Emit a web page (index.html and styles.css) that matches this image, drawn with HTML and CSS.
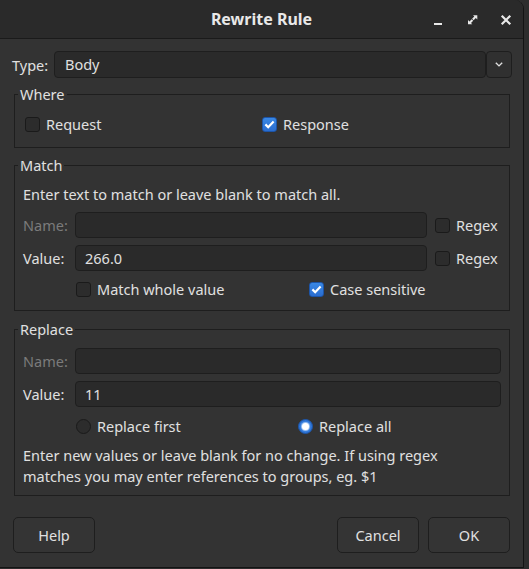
FILE: index.html
```html
<!DOCTYPE html>
<html lang="en">
<head>
<meta charset="utf-8">
<title>Rewrite Rule</title>
<link rel="stylesheet" href="styles.css">
</head>
<body>
<div class="window">
  <header class="titlebar">
    <div class="title">Rewrite Rule</div>
    <div class="wm">
      <svg viewBox="0 0 24 24"><rect x="8" y="16" width="8" height="2" fill="#e8e8e8"/></svg>
      <svg viewBox="0 0 24 24"><path d="M13 8.3H17.3V12.6L15.8 11.1L13.6 13.3L12.1 11.8L14.3 9.6Z" fill="#e8e8e8"/><path d="M12.3 17.3H8V13L9.5 14.5L11.7 12.3L13.2 13.8L11 16Z" fill="#e8e8e8"/></svg>
      <svg viewBox="0 0 24 24"><path d="M8.5 9.5L15.5 16.5M15.5 9.5L8.5 16.5" stroke="#e8e8e8" stroke-width="2.2" stroke-linecap="square"/></svg>
    </div>
  </header>
  <main class="content">
    <div class="type-row">
      <span class="type-label">Type:</span>
      <div class="combo">Body</div>
      <div class="combo-btn"><svg viewBox="0 0 8 5" width="8" height="5"><path d="M0.8 0.8L4 3.9L7.2 0.8" fill="none" stroke="#e0e0e0" stroke-width="1.4"/></svg></div>
    </div>

    <fieldset class="group g-where">
      <legend>Where</legend>
      <div class="inner inner-where">
        <div class="opts opts-where">
          <label class="check"><span class="box"></span>Request</label>
          <label class="check"><span class="box on"><svg viewBox="0 0 15 15"><path d="M3.4 7.4L6.2 10.2L11.6 4.6" fill="none" stroke="#fff" stroke-width="2.2"/></svg></span>Response</label>
        </div>
      </div>
    </fieldset>

    <fieldset class="group g-match">
      <legend>Match</legend>
      <div class="inner inner-match">
        <p class="hint">Enter text to match or leave blank to match all.</p>
        <div class="field-row fr-match first">
          <span class="flabel disabled">Name:</span>
          <div class="input"></div>
          <label class="check regex"><span class="box"></span>Regex</label>
        </div>
        <div class="field-row fr-match">
          <span class="flabel">Value:</span>
          <div class="input">266.0</div>
          <label class="check regex"><span class="box"></span>Regex</label>
        </div>
        <div class="opts opts-match">
          <label class="check"><span class="box"></span>Match whole value</label>
          <label class="check"><span class="box on"><svg viewBox="0 0 15 15"><path d="M3.4 7.4L6.2 10.2L11.6 4.6" fill="none" stroke="#fff" stroke-width="2.2"/></svg></span>Case sensitive</label>
        </div>
      </div>
    </fieldset>

    <fieldset class="group g-replace">
      <legend>Replace</legend>
      <div class="inner inner-replace">
        <div class="field-row fr-replace first">
          <span class="flabel disabled">Name:</span>
          <div class="input"></div>
        </div>
        <div class="field-row fr-replace">
          <span class="flabel">Value:</span>
          <div class="input">11</div>
        </div>
        <div class="opts opts-replace">
          <label class="check"><span class="radio"></span>Replace first</label>
          <label class="check"><span class="radio on"></span>Replace all</label>
        </div>
        <p class="hint hint2">Enter new values or leave blank for no change. If using regex matches you may enter references to groups, eg. $1</p>
      </div>
    </fieldset>

    <div class="buttons">
      <button class="btn help">Help</button>
      <button class="btn cancel">Cancel</button>
      <button class="btn">OK</button>
    </div>
  </main>
</div>
</body>
</html>
```

FILE: styles.css
```css
* { box-sizing: border-box; }
html, body { margin: 0; padding: 0; }
body {
  width: 529px;
  height: 569px;
  overflow: hidden;
  background: #2d2d2d;
  font-family: "Noto Sans", "DejaVu Sans", sans-serif;
  font-size: 14.5px;
  color: #e0e0e0;
}
.window {
  width: 524px;
  height: 568px;
  background: #333333;
  border-right: 1px solid #141414;
  border-bottom: 1px solid #141414;
  border-top-right-radius: 9px;
  overflow: hidden;
  display: flex;
  flex-direction: column;
}
.titlebar {
  flex: none;
  height: 39px;
  background: #2a2a2a;
  border-bottom: 1px solid #1a1a1a;
  display: grid;
  grid-template-columns: 1fr auto 1fr;
  align-items: center;
}
.title {
  grid-column: 2;
  font-weight: 700;
  font-size: 16px;
  color: #e8e8e8;
}
.wm {
  grid-column: 3;
  justify-self: end;
  display: flex;
  gap: 10px;
  padding-right: 5px;
}
.wm svg { width: 24px; height: 24px; display: block; }

.content {
  flex: 1;
  display: flex;
  flex-direction: column;
  padding: 12px 13px 0 14px;
}
.type-row {
  display: flex;
  align-items: center;
  height: 27px;
  margin: 0 -2px;
}
.type-label { width: 42px; }
.combo {
  flex: 1;
  height: 27px;
  line-height: 25px;
  padding-left: 10px;
  background: #2a2a2a;
  border: 1px solid #1e1e1e;
  border-radius: 4px;
}
.combo-btn {
  width: 26px;
  height: 27px;
  display: flex;
  align-items: center;
  justify-content: center;
  background: #303030;
  border: 1px solid #1e1e1e;
  border-radius: 4px;
}
.combo-btn svg { display: block; }

.group {
  margin: 8px 0 0;
  padding: 0;
  border: 1px solid #1e1e1e;
  min-width: 0;
}
.group legend {
  margin-left: 3px;
  padding: 0 2px;
  line-height: 16px;
  font-size: 14.5px;
}
.g-match { margin-top: 9px; }
.g-replace { margin-top: 10px; }

.inner-where { padding: 11px 0 12px 10px; }
.inner-match { padding: 11px 0 10px 8px; }
.inner-replace { padding: 11px 8px 8px 8px; }

.hint { margin: 0; line-height: 20px; }
.hint2 { margin-top: 8px; line-height: 21px; max-width: 430px; }

.field-row {
  display: grid;
  align-items: center;
  margin-top: 7px;
}
.inner-match .field-row.first { margin-top: 8px; }
.fr-match { grid-template-columns: 52px 352px auto; }
.fr-replace { grid-template-columns: 52px 1fr; }
.inner-replace .field-row.first { margin-top: 0; }
.flabel { white-space: nowrap; }
.flabel.disabled { color: #7b7b7b; }
.input {
  height: 26px;
  line-height: 24px;
  padding-left: 9px;
  background: #2a2a2a;
  border: 1px solid #1e1e1e;
  border-radius: 4px;
}
.regex { margin-left: 8px; }

.opts { display: grid; }
.opts-where { grid-template-columns: 237px auto; }
.opts-match { grid-template-columns: 233px auto; margin-top: 7px; padding-left: 1px; margin-left: 52px; }
.opts-replace { grid-template-columns: 222px auto; margin-top: 8px; padding-left: 1px; margin-left: 52px; }

.check {
  display: flex;
  align-items: center;
  gap: 6px;
  height: 22px;
  white-space: nowrap;
}
.box {
  flex: none;
  width: 15px;
  height: 15px;
  border: 1px solid #1a1a1a;
  border-radius: 3px;
  background: #2c2c2c;
  position: relative;
}
.box.on {
  background: linear-gradient(#3a88e4, #2a6dd0);
  border-color: #1d55a8;
}
.box svg {
  position: absolute;
  left: -1px;
  top: -1px;
  width: 15px;
  height: 15px;
}
.radio {
  flex: none;
  width: 15px;
  height: 15px;
  border: 1px solid #1a1a1a;
  border-radius: 50%;
  background: #2c2c2c;
  display: flex;
  align-items: center;
  justify-content: center;
}
.radio.on {
  background: #2e76d8;
  border-color: #1d55a8;
}
.radio.on::after {
  content: "";
  width: 7px;
  height: 7px;
  border-radius: 50%;
  background: #ffffff;
  box-shadow: 0 0 1px 1px rgba(200, 225, 255, 0.8);
}

.buttons {
  display: flex;
  margin-top: 21px;
  margin-left: -1px;
  gap: 9px;
}
.btn {
  width: 82px;
  height: 36px;
  font-family: inherit;
  font-size: 14.5px;
  color: #e0e0e0;
  background: #343434;
  border: 1px solid #1e1e1e;
  border-radius: 5px;
  padding: 0;
}
.help { margin-right: auto; }
```
